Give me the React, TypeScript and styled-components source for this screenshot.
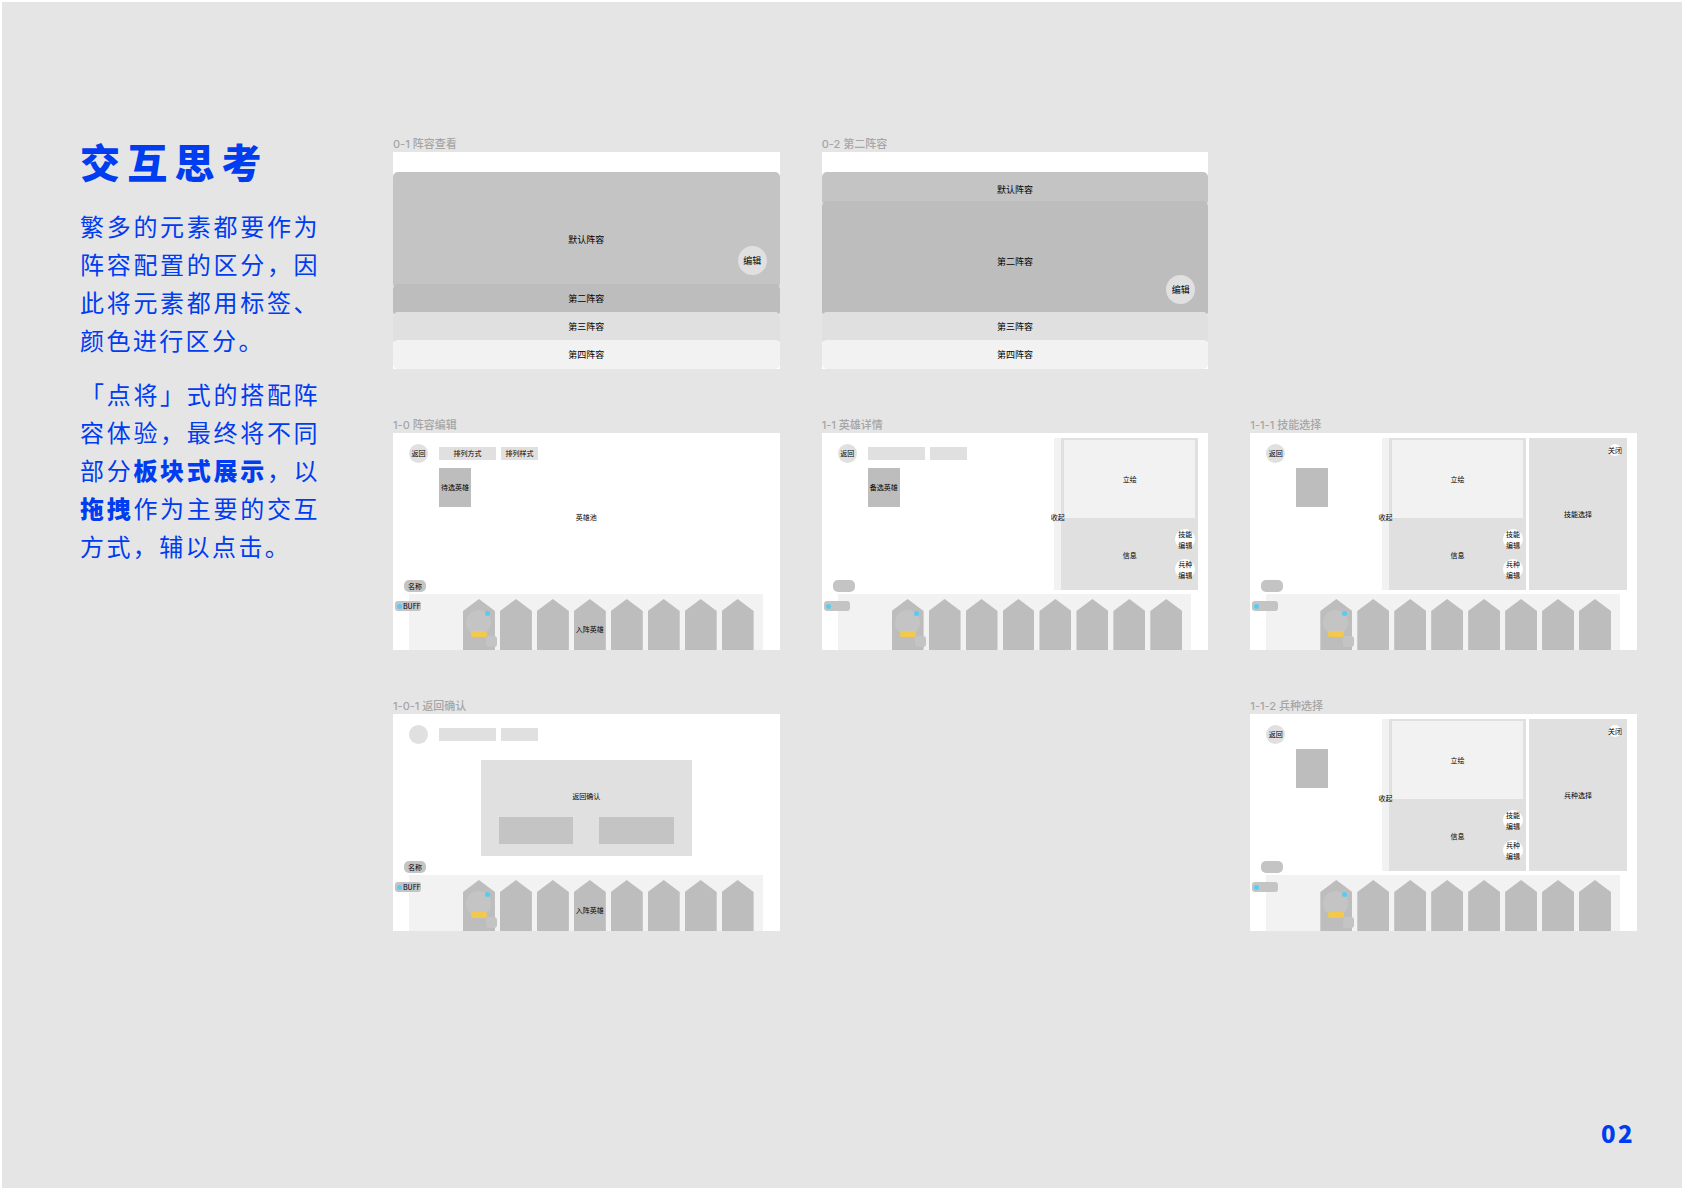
import React from "react";
import styled, { createGlobalStyle, css } from "styled-components";

const color = {
  page: "#e5e5e5",
  ink: "#003cf0",
  caption: "#a6a6a6",
  text: "#000",
  gray1: "#bdbdbd",
  gray2: "#c4c4c4",
  gray3: "#e0e0e0",
  gray4: "#f2f2f2",
  blue: "#56ccf2",
  yellow: "#f2c94c",
};

const GlobalStyle = createGlobalStyle`
  *, *::before, *::after { box-sizing: border-box; }
  body {
    margin: 0;
    background: #fff;
    font-family: "Noto Sans CJK SC", "Noto Sans", sans-serif;
  }
  h1, h2, p { margin: 0; }
  button {
    margin: 0;
    padding: 0;
    border: 0;
    font: inherit;
    color: inherit;
    cursor: pointer;
  }
`;

const Page = styled.div`
  display: flex;
  flex-direction: column;
  min-height: 100vh;
  padding: 134px 45px 37px 78px;
  border: 2px solid #fff;
  background: ${color.page};
`;

const Content = styled.div`
  display: flex;
  align-items: flex-start;
  gap: 73px;
`;

const Intro = styled.section`
  flex: 0 0 240px;
  padding-top: 1px;
  color: ${color.ink};
`;

const Heading = styled.h1`
  font-size: 40px;
  line-height: 48px;
  font-weight: 900;
  letter-spacing: 0.18em;
  white-space: nowrap;
  margin-bottom: 22px;
`;

const Paragraph = styled.p`
  font-size: 24px;
  line-height: 38px;
  font-weight: 400;
  letter-spacing: 0.1em;
  text-align: justify;

  & + & {
    margin-top: 16px;
  }

  strong {
    font-weight: 900;
  }
`;

const Board = styled.main`
  flex: 1;
  display: grid;
  grid-template-columns: repeat(3, minmax(0, 1fr));
  gap: 48px 42px;
`;

const Cell = styled.section<{ $column: number }>`
  grid-column: ${(p) => p.$column};
`;

const Caption = styled.h2`
  font-family: Inter, "Noto Sans CJK SC", sans-serif;
  font-size: 11px;
  line-height: 16px;
  font-weight: 500;
  color: ${color.caption};
  white-space: nowrap;
`;

const Frame = styled.div`
  position: relative;
  display: flex;
  flex-direction: column;
  height: 217px;
  background: #fff;
  color: ${color.text};
  font-size: 7px;
  line-height: 11px;
  white-space: nowrap;
`;

/* Stacked line-ups */

const Stack = styled.div`
  flex: 1;
  display: flex;
  flex-direction: column;
  padding-top: 20px;
  font-size: 9px;
  line-height: 14px;
`;

const Layer = styled.div<{ $tone: string; $open?: boolean; $inset: number }>`
  position: relative;
  flex: ${(p) => (p.$open ? "1 1 auto" : "0 0 33px")};
  padding-top: ${(p) => p.$inset}px;
  border-radius: 5px;
  background: ${(p) => p.$tone};
  text-align: center;

  & + & {
    margin-top: -5px;
  }

  &:first-child {
    flex-basis: 34px;
  }

  &:last-child {
    flex-basis: 29px;
  }
`;

const EditButton = styled.button`
  position: absolute;
  top: 74px;
  right: 13px;
  width: 29px;
  height: 29px;
  border-radius: 50%;
  background: ${color.gray3};
`;

/* Editor frames */

const Stage = styled.div`
  flex: 1;
  display: flex;
  flex-direction: column;
  align-items: flex-start;
  padding-top: 11px;
`;

const Toolbar = styled.div`
  display: flex;
  align-items: center;
  gap: 5px;
  height: 19px;
  margin-left: 16px;
`;

const BackButton = styled.button`
  width: 19px;
  height: 19px;
  margin-right: 6px;
  border-radius: 50%;
  background: ${color.gray3};
`;

const SortButton = styled.button<{ $wide?: boolean }>`
  width: ${(p) => (p.$wide ? 57 : 37)}px;
  height: 13px;
  background: ${color.gray3};
`;

const HeroCard = styled.div`
  display: grid;
  place-content: center;
  width: 32px;
  height: 39px;
  margin: 5px 0 0 46px;
  background: ${color.gray1};
`;

const PoolLabel = styled.p`
  align-self: stretch;
  margin-top: 5px;
  text-align: center;
`;

const Dialog = styled.div`
  align-self: stretch;
  height: 96px;
  margin: 16px 88px 0;
  padding: 31px 18px 0;
  background: ${color.gray3};
  text-align: center;
`;

const DialogActions = styled.div`
  display: flex;
  gap: 26px;
  margin-top: 15px;
`;

const DialogButton = styled.button`
  flex: 1;
  height: 27px;
  background: ${color.gray2};
`;

const NameTag = styled.div`
  width: 22px;
  height: 12px;
  margin: auto 0 2px 11px;
  border-radius: 5px;
  background: ${color.gray2};
  line-height: 12px;
  text-align: center;
`;

const BuffTag = styled.div`
  position: absolute;
  left: 2px;
  bottom: 39px;
  display: flex;
  align-items: center;
  gap: 1px;
  width: 26px;
  height: 10px;
  padding-left: 2px;
  border-radius: 3px;
  background: ${color.gray2};
`;

const Dot = styled.span`
  flex: none;
  width: 5px;
  height: 5px;
  border-radius: 50%;
  background: ${color.blue};
`;

const Bench = styled.div`
  display: flex;
  gap: 5px;
  height: 56px;
  margin: 0 17px 0 16px;
  padding: 5px 9px 0 54px;
  background: ${color.gray4};
`;

const Slot = styled.div`
  position: relative;
  flex: 1 1 0;
  min-width: 0;
  display: flex;
  justify-content: center;
  padding-top: 25px;

  &::before {
    content: "";
    position: absolute;
    inset: 0;
    background: ${color.gray1};
    clip-path: polygon(50% 0, 100% 12px, 100% 100%, 0 100%, 0 12px);
  }

  span {
    position: relative;
  }
`;

const over = css`
  position: absolute;
`;

const Portrait = styled.i`
  ${over}
  left: 3px;
  top: 11px;
  width: 25px;
  height: 25px;
  border-radius: 50%;
  background: ${color.gray2};
`;

const StatusDot = styled.i`
  ${over}
  left: 22px;
  top: 12px;
  width: 5px;
  height: 5px;
  border-radius: 50%;
  background: ${color.blue};
`;

const Ribbon = styled.i`
  ${over}
  left: 8px;
  top: 32px;
  width: 16px;
  height: 6px;
  border-radius: 2px;
  background: ${color.yellow};
`;

const TroopBadge = styled.i`
  ${over}
  left: 23px;
  top: 37px;
  width: 11px;
  height: 11px;
  border-radius: 3px;
  background: ${color.gray2};
`;

/* Drawers that slide over the editor */

const Drawers = styled.div`
  position: absolute;
  top: 5px;
  right: 10px;
  display: flex;
  gap: 3px;
  height: 152px;
`;

const HeroDrawer = styled.div`
  display: flex;
  width: 144px;
`;

const CollapseHandle = styled.button`
  z-index: 1;
  flex: 0 0 7px;
  min-width: 0;
  display: flex;
  align-items: center;
  justify-content: center;
  padding-top: 6px;
  background: ${color.gray4};
  white-space: nowrap;
`;

const HeroDetail = styled.div`
  flex: 1;
  display: flex;
  flex-direction: column;
  padding: 2px 3px 0;
  background: ${color.gray3};
`;

const Artwork = styled.div`
  display: grid;
  place-content: center;
  height: 78px;
  background: ${color.gray4};
`;

const HeroInfo = styled.div`
  position: relative;
  flex: 1;
  display: grid;
  place-content: center;
  padding-top: 2px;
`;

const RoundActions = styled.div`
  position: absolute;
  top: 11px;
  right: 0;
  display: flex;
  flex-direction: column;
  gap: 10px;
`;

const RoundButton = styled.button`
  width: 20px;
  height: 20px;
  border-radius: 50%;
  background: #fff;
`;

const PickerDrawer = styled.div`
  position: relative;
  display: grid;
  place-content: center;
  width: 98px;
  background: ${color.gray3};
`;

const CloseButton = styled.button`
  position: absolute;
  top: 6px;
  right: 6px;
  display: flex;
  align-items: center;
  justify-content: center;
  width: 12px;
  height: 12px;
  border-radius: 50%;
  background: #fff;
  white-space: nowrap;
`;

const PageNumber = styled.footer`
  margin: auto 2px 0 0;
  align-self: flex-end;
  color: ${color.ink};
  font-size: 24px;
  line-height: 36px;
  font-weight: 900;
  letter-spacing: 0.1em;
`;

function LineupFrame({ open }: { open: 1 | 2 }) {
  return (
    <Frame>
      <Stack>
        <Layer $tone={color.gray2} $open={open === 1} $inset={open === 1 ? 61 : 11}>
          默认阵容
          {open === 1 && <EditButton type="button">编辑</EditButton>}
        </Layer>
        <Layer $tone={color.gray1} $open={open === 2} $inset={open === 2 ? 54 : 8}>
          第二阵容
          {open === 2 && <EditButton type="button">编辑</EditButton>}
        </Layer>
        <Layer $tone={color.gray3} $inset={8}>第三阵容</Layer>
        <Layer $tone={color.gray4} $inset={8}>第四阵容</Layer>
      </Stack>
    </Frame>
  );
}

function Tools({ back, labels }: { back?: string; labels?: [string, string] }) {
  return (
    <Toolbar>
      <BackButton type="button">{back}</BackButton>
      {labels && (
        <>
          <SortButton type="button" $wide>{labels[0]}</SortButton>
          <SortButton type="button">{labels[1]}</SortButton>
        </>
      )}
    </Toolbar>
  );
}

function EditorFrame({
  labelled,
  children,
  overlay,
}: {
  labelled?: boolean;
  children: React.ReactNode;
  overlay?: React.ReactNode;
}) {
  return (
    <Frame>
      <Stage>
        {children}
        <NameTag>{labelled && "名称"}</NameTag>
      </Stage>
      <Bench>
        {Array.from({ length: 8 }, (_, i) => (
          <Slot key={i}>
            {i === 0 && (
              <>
                <Portrait />
                <StatusDot />
                <Ribbon />
                <TroopBadge />
              </>
            )}
            {i === 3 && labelled && <span>入阵英雄</span>}
          </Slot>
        ))}
      </Bench>
      <BuffTag>
        <Dot />
        {labelled && "BUFF"}
      </BuffTag>
      {overlay}
    </Frame>
  );
}

function DrawerSet({ picker }: { picker?: string }) {
  return (
    <Drawers>
      <HeroDrawer>
        <CollapseHandle type="button">收起</CollapseHandle>
        <HeroDetail>
          <Artwork>立绘</Artwork>
          <HeroInfo>
            信息
            <RoundActions>
              <RoundButton type="button">技能<br />编辑</RoundButton>
              <RoundButton type="button">兵种<br />编辑</RoundButton>
            </RoundActions>
          </HeroInfo>
        </HeroDetail>
      </HeroDrawer>
      {picker && (
        <PickerDrawer>
          {picker}
          <CloseButton type="button">关闭</CloseButton>
        </PickerDrawer>
      )}
    </Drawers>
  );
}

export default function App() {
  return (
    <>
      <GlobalStyle />
      <Page>
        <Content>
          <Intro>
            <Heading>交互思考</Heading>
            <Paragraph>
              繁多的元素都要作为阵容配置的区分，因此将元素都用标签、颜色进行区分。
            </Paragraph>
            <Paragraph>
              「点将」式的搭配阵容体验，最终将不同部分<strong>板块式展示</strong>，以<strong>拖拽</strong>作为主要的交互方式，辅以点击。
            </Paragraph>
          </Intro>
          <Board>
            <Cell $column={1}>
              <Caption>0-1 阵容查看</Caption>
              <LineupFrame open={1} />
            </Cell>
            <Cell $column={2}>
              <Caption>0-2 第二阵容</Caption>
              <LineupFrame open={2} />
            </Cell>
            <Cell $column={1}>
              <Caption>1-0 阵容编辑</Caption>
              <EditorFrame labelled>
                <Tools back="返回" labels={["排列方式", "排列样式"]} />
                <HeroCard>待选英雄</HeroCard>
                <PoolLabel>英雄池</PoolLabel>
              </EditorFrame>
            </Cell>
            <Cell $column={2}>
              <Caption>1-1 英雄详情</Caption>
              <EditorFrame overlay={<DrawerSet />}>
                <Tools back="返回" labels={["", ""]} />
                <HeroCard>备选英雄</HeroCard>
              </EditorFrame>
            </Cell>
            <Cell $column={3}>
              <Caption>1-1-1 技能选择</Caption>
              <EditorFrame overlay={<DrawerSet picker="技能选择" />}>
                <Tools back="返回" />
                <HeroCard />
              </EditorFrame>
            </Cell>
            <Cell $column={1}>
              <Caption>1-0-1 返回确认</Caption>
              <EditorFrame labelled>
                <Tools labels={["", ""]} />
                <Dialog>
                  返回确认
                  <DialogActions>
                    <DialogButton type="button" />
                    <DialogButton type="button" />
                  </DialogActions>
                </Dialog>
              </EditorFrame>
            </Cell>
            <Cell $column={3}>
              <Caption>1-1-2 兵种选择</Caption>
              <EditorFrame overlay={<DrawerSet picker="兵种选择" />}>
                <Tools back="返回" />
                <HeroCard />
              </EditorFrame>
            </Cell>
          </Board>
        </Content>
        <PageNumber>02</PageNumber>
      </Page>
    </>
  );
}
